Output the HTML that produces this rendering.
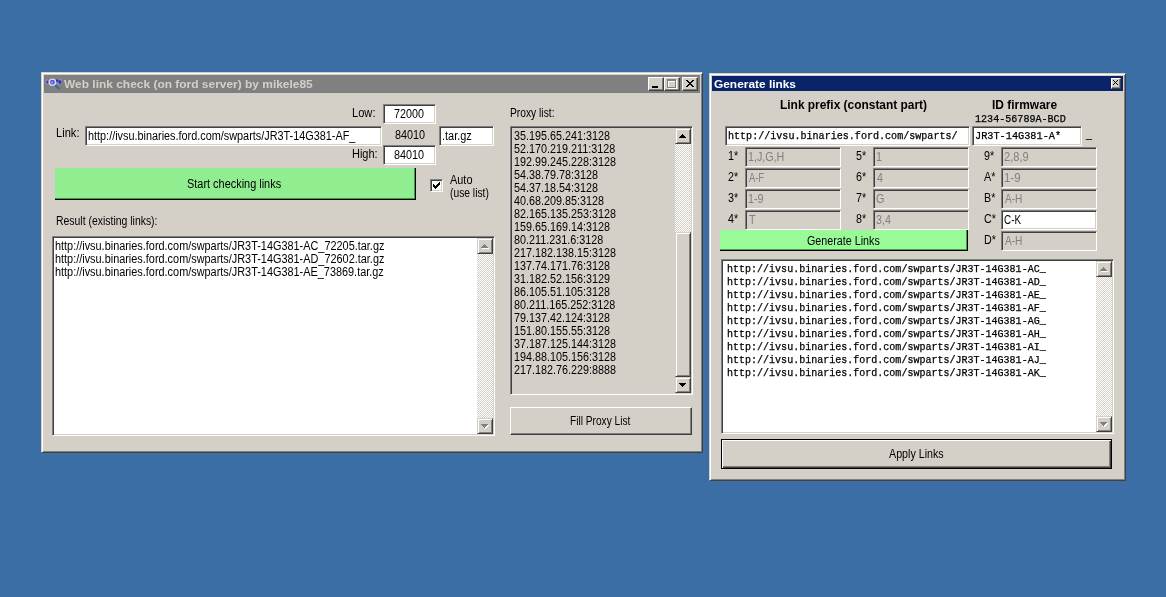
<!DOCTYPE html>
<html><head><meta charset="utf-8"><title>Web link check</title>
<style>
html,body{margin:0;padding:0}
body{width:1166px;height:597px;background:#3A6EA5;position:relative;overflow:hidden;color:#000}
*{box-sizing:border-box}
.a{position:absolute;white-space:pre;transform-origin:0 0;line-height:13px}
.n{font:normal 12.5px/13px "Liberation Sans",sans-serif}
.tb{font:bold 11px/13px "Liberation Sans",sans-serif}
.hb{font:bold 12px/13px "Liberation Sans",sans-serif}
.m{font:normal 10px/13px "Liberation Mono",monospace;-webkit-text-stroke:0.25px #000}
.win{position:absolute;background:#D4D0C8;border:1px solid;border-color:#D4D0C8 #404040 #404040 #D4D0C8;box-shadow:inset 1px 1px 0 #fff,inset -1px -1px 0 #808080}
.sunk{position:absolute;border:1px solid;border-color:#808080 #fff #fff #808080;box-shadow:inset 1px 1px 0 #404040,inset -1px -1px 0 #D4D0C8}
.btn{position:absolute;border:1px solid;border-color:#fff #404040 #404040 #fff;box-shadow:inset -1px -1px 0 #808080;background:#D4D0C8}
.sb{border-color:#D4D0C8 #404040 #404040 #D4D0C8;box-shadow:inset 1px 1px 0 #fff,inset -1px -1px 0 #808080}
.track{position:absolute;background-color:#E9E7E3;background-image:repeating-conic-gradient(#fff 0 25%,#D4D0C8 0 50%);background-size:2px 2px}

</style></head><body>
<div class="win" style="left:41px;top:72px;width:662px;height:381px"></div>
<div class="a" style="left:44px;top:75px;width:656px;height:18px;background:#808080"></div>
<svg class="a" style="left:46px;top:77px" width="17" height="14" viewBox="0 0 17 14">
<ellipse cx="1.5" cy="5" rx="2" ry="2.7" fill="#9A9CE0" opacity=".55"/>
<ellipse cx="12.7" cy="4.6" rx="3.6" ry="3" fill="#9A9CE0" opacity=".5"/>
<ellipse cx="1.5" cy="5" rx="1" ry="1.6" fill="#3030C4"/>
<ellipse cx="11.2" cy="3.6" rx="1.3" ry="1.3" fill="#2A2AC4"/>
<ellipse cx="13.9" cy="5" rx="1.6" ry="1.8" fill="#2A2AC4"/>
<path d="M9.4 8.4L12.8 11.4" stroke="#2A6CA8" stroke-width="2" stroke-linecap="round"/>
<circle cx="6.4" cy="5.2" r="3.1" fill="#5458D0" stroke="#DADEF2" stroke-width="1.3"/>
<circle cx="6" cy="5.6" r="1" fill="#A8ACE8"/>
</svg>
<div class="btn" style="left:648px;top:77px;width:16px;height:14px;"></div><div class="a" style="left:652px;top:86px;width:6px;height:2px;background:#000"></div>
<div class="btn" style="left:664px;top:77px;width:16px;height:14px;"></div><div class="a" style="left:668px;top:80px;width:9px;height:9px;border:1px solid #fff;border-top-width:2px"></div><div class="a" style="left:667px;top:79px;width:9px;height:9px;border:1px solid #808080;border-top-width:2px"></div>
<div class="btn" style="left:682px;top:77px;width:16px;height:14px;"></div><svg class="a" style="left:686px;top:80px" width="8" height="7" shape-rendering="crispEdges"><path d="M0 0h2v1h1v1h2v-1h1v-1h2v1h-1v1h-1v1h-1v1h1v1h1v1h1v1h-2v-1h-1v-1h-2v1h-1v1h-2v-1h1v-1h1v-1h1v-1h-1v-1h-1v-1h-1z" fill="#000"/></svg>
<div class="sunk" style="left:383px;top:104px;width:53px;height:20px;background:#fff"></div>
<div class="sunk" style="left:85px;top:126px;width:297px;height:20px;background:#fff"></div>
<div class="sunk" style="left:439px;top:126px;width:55px;height:20px;background:#fff"></div>
<div class="sunk" style="left:383px;top:145px;width:53px;height:20px;background:#fff"></div>
<div class="a" style="left:55px;top:168px;width:361px;height:32px;background:#90EE90;border-right:1px solid #000;border-bottom:1px solid #000;box-shadow:inset -1px -1px 0 #3E9A3E"></div>
<div class="sunk" style="left:430px;top:179px;width:13px;height:13px;background:#fff"></div>
<svg class="a" style="left:433px;top:182px" width="7" height="7" shape-rendering="crispEdges"><path d="M0 2h1v1h1v1h1v-1h1v-1h1v-1h1v-1h1v3h-1v1h-1v1h-1v1h-1v1h-1v-1h-1v-1h-1z" fill="#000"/></svg>
<div class="sunk" style="left:52px;top:236px;width:443px;height:200px;background:#fff"></div>
<div class="track" style="left:477px;top:238px;width:16px;height:196px"></div><div class="btn sb" style="left:477px;top:238px;width:16px;height:16px;"></div><svg class="a" style="left:482px;top:245px" width="7" height="4" shape-rendering="crispEdges"><path d="M3 0h1v1h1v1h1v1h1v1h-7v-1h1v-1h1v-1h1z" fill="#fff"/></svg><svg class="a" style="left:481px;top:244px" width="7" height="4" shape-rendering="crispEdges"><path d="M3 0h1v1h1v1h1v1h1v1h-7v-1h1v-1h1v-1h1z" fill="#808080"/></svg><div class="btn sb" style="left:477px;top:418px;width:16px;height:16px;"></div><svg class="a" style="left:482px;top:425px" width="7" height="4" shape-rendering="crispEdges"><path d="M0 0h7v1h-1v1h-1v1h-1v1h-1v-1h-1v-1h-1v-1h-1z" fill="#fff"/></svg><svg class="a" style="left:481px;top:424px" width="7" height="4" shape-rendering="crispEdges"><path d="M0 0h7v1h-1v1h-1v1h-1v1h-1v-1h-1v-1h-1v-1h-1z" fill="#808080"/></svg>
<div class="sunk" style="left:510px;top:126px;width:183px;height:269px;background:#D4D0C8"></div>
<div class="track" style="left:675px;top:128px;width:16px;height:265px"></div><div class="btn sb" style="left:675px;top:128px;width:16px;height:16px;"></div><svg class="a" style="left:679px;top:134px" width="7" height="4" shape-rendering="crispEdges"><path d="M3 0h1v1h1v1h1v1h1v1h-7v-1h1v-1h1v-1h1z" fill="#000"/></svg><div class="btn sb" style="left:675px;top:377px;width:16px;height:16px;"></div><svg class="a" style="left:679px;top:383px" width="7" height="4" shape-rendering="crispEdges"><path d="M0 0h7v1h-1v1h-1v1h-1v1h-1v-1h-1v-1h-1v-1h-1z" fill="#000"/></svg><div class="btn sb" style="left:675px;top:232px;width:16px;height:145px;"></div>
<div class="btn" style="left:510px;top:407px;width:182px;height:28px;"></div>
<div class="win" style="left:709px;top:73px;width:417px;height:408px"></div>
<div class="a" style="left:712px;top:76px;width:411px;height:15px;background:#0A246A"></div>
<div class="btn" style="left:1111px;top:78px;width:10px;height:11px;"></div><svg class="a" style="left:1113px;top:80px" width="5" height="5" shape-rendering="crispEdges"><path d="M0 0h1v1h1v1h1v-1h1v-1h1v1h-1v1h-1v1h1v1h1v1h-1v-1h-1v-1h-1v1h-1v1h-1v-1h1v-1h1v-1h-1v-1h-1z" fill="#000"/></svg>
<div class="sunk" style="left:725px;top:126px;width:245px;height:20px;background:#fff"></div>
<div class="sunk" style="left:972px;top:126px;width:110px;height:20px;background:#fff"></div>
<div class="sunk" style="left:745px;top:147px;width:96px;height:20px;background:#D4D0C8"></div>
<div class="sunk" style="left:745px;top:168px;width:96px;height:20px;background:#D4D0C8"></div>
<div class="sunk" style="left:745px;top:189px;width:96px;height:20px;background:#D4D0C8"></div>
<div class="sunk" style="left:745px;top:210px;width:96px;height:20px;background:#D4D0C8"></div>
<div class="sunk" style="left:873px;top:147px;width:96px;height:20px;background:#D4D0C8"></div>
<div class="sunk" style="left:873px;top:168px;width:96px;height:20px;background:#D4D0C8"></div>
<div class="sunk" style="left:873px;top:189px;width:96px;height:20px;background:#D4D0C8"></div>
<div class="sunk" style="left:873px;top:210px;width:96px;height:20px;background:#D4D0C8"></div>
<div class="sunk" style="left:1001px;top:147px;width:96px;height:20px;background:#D4D0C8"></div>
<div class="sunk" style="left:1001px;top:168px;width:96px;height:20px;background:#D4D0C8"></div>
<div class="sunk" style="left:1001px;top:189px;width:96px;height:20px;background:#D4D0C8"></div>
<div class="sunk" style="left:1001px;top:210px;width:96px;height:20px;background:#fff"></div>
<div class="sunk" style="left:1001px;top:231px;width:96px;height:20px;background:#D4D0C8"></div>
<div class="a" style="left:720px;top:230px;width:248px;height:21px;background:#98FB98;border-right:1px solid #000;border-bottom:1px solid #000;box-shadow:inset -1px -1px 0 #42A242"></div>
<div class="sunk" style="left:721px;top:259px;width:393px;height:175px;background:#fff"></div>
<div class="track" style="left:1096px;top:261px;width:16px;height:171px"></div><div class="btn sb" style="left:1096px;top:261px;width:16px;height:16px;"></div><svg class="a" style="left:1101px;top:268px" width="7" height="4" shape-rendering="crispEdges"><path d="M3 0h1v1h1v1h1v1h1v1h-7v-1h1v-1h1v-1h1z" fill="#fff"/></svg><svg class="a" style="left:1100px;top:267px" width="7" height="4" shape-rendering="crispEdges"><path d="M3 0h1v1h1v1h1v1h1v1h-7v-1h1v-1h1v-1h1z" fill="#808080"/></svg><div class="btn sb" style="left:1096px;top:416px;width:16px;height:16px;"></div><svg class="a" style="left:1101px;top:423px" width="7" height="4" shape-rendering="crispEdges"><path d="M0 0h7v1h-1v1h-1v1h-1v1h-1v-1h-1v-1h-1v-1h-1z" fill="#fff"/></svg><svg class="a" style="left:1100px;top:422px" width="7" height="4" shape-rendering="crispEdges"><path d="M0 0h7v1h-1v1h-1v1h-1v1h-1v-1h-1v-1h-1v-1h-1z" fill="#808080"/></svg>
<div class="btn" style="left:721px;top:439px;width:391px;height:30px;border-color:#000;box-shadow:inset 1px 1px 0 #fff,inset -1px -1px 0 #404040,inset -2px -2px 0 #808080"></div>
<div id="txt" style="position:absolute;left:0;top:0;width:1166px;height:597px;will-change:transform">
<div class="a tb" id="t1" style="left:64.00px;top:78.00px;transform:scaleX(1.0860);color:#D4D0C8">Web link check (on ford server) by mikele85</div>
<div class="a n" id="low" style="left:352.00px;top:107.00px;transform:scaleX(0.8897)">Low:</div>
<div class="a n" id="v72" style="left:394.00px;top:108.00px;transform:scaleX(0.8586)">72000</div>
<div class="a n" id="link" style="left:56.00px;top:127.00px;transform:scaleX(0.8897)">Link:</div>
<div class="a n" id="lk" style="left:88.00px;top:130.00px;transform:scaleX(0.8688)">http://ivsu.binaries.ford.com/swparts/JR3T-14G381-AF_</div>
<div class="a n" id="v84a" style="left:395.00px;top:129.00px;transform:scaleX(0.8660)">84010</div>
<div class="a n" id="tgz" style="left:442.00px;top:130.00px;transform:scaleX(0.8748)">.tar.gz</div>
<div class="a n" id="high" style="left:352.00px;top:148.00px;transform:scaleX(0.8779)">High:</div>
<div class="a n" id="v84b" style="left:394.00px;top:149.00px;transform:scaleX(0.8660)">84010</div>
<div class="a n" id="start" style="left:187.00px;top:178.00px;transform:scaleX(0.8740)">Start checking links</div>
<div class="a n" id="auto" style="left:450.00px;top:174.00px;transform:scaleX(0.8738)">Auto</div>
<div class="a n" id="usel" style="left:450.00px;top:187.00px;transform:scaleX(0.8228)">(use list)</div>
<div class="a n" id="res" style="left:56.00px;top:215.00px;transform:scaleX(0.8349)">Result (existing links):</div>
<div class="a n" id="rr" style="left:55.00px;top:240.00px;transform:scaleX(0.8715)">http://ivsu.binaries.ford.com/swparts/JR3T-14G381-AC_72205.tar.gz
http://ivsu.binaries.ford.com/swparts/JR3T-14G381-AD_72602.tar.gz
http://ivsu.binaries.ford.com/swparts/JR3T-14G381-AE_73869.tar.gz</div>
<div class="a n" id="pl" style="left:510.00px;top:107.00px;transform:scaleX(0.8210)">Proxy list:</div>
<div class="a n" id="pp" style="left:514.00px;top:130.00px;transform:scaleX(0.8626)">35.195.65.241:3128
52.170.219.211:3128
192.99.245.228:3128
54.38.79.78:3128
54.37.18.54:3128
40.68.209.85:3128
82.165.135.253:3128
159.65.169.14:3128
80.211.231.6:3128
217.182.138.15:3128
137.74.171.76:3128
31.182.52.156:3129
86.105.51.105:3128
80.211.165.252:3128
79.137.42.124:3128
151.80.155.55:3128
37.187.125.144:3128
194.88.105.156:3128
217.182.76.229:8888</div>
<div class="a n" id="fill" style="left:570.00px;top:415.00px;transform:scaleX(0.8118)">Fill Proxy List</div>
<div class="a tb" id="t2" style="left:714.00px;top:78.00px;transform:scaleX(1.0814);color:#fff">Generate links</div>
<div class="a hb" id="h1" style="left:780.00px;top:99.00px;transform:scaleX(0.9934)">Link prefix (constant part)</div>
<div class="a hb" id="h2" style="left:992.00px;top:99.00px;transform:scaleX(0.9956)">ID firmware</div>
<div class="a m" id="m0" style="left:975.00px;top:113.00px;transform:scaleX(1.0078)">1234-56789A-BCD</div>
<div class="a m" id="m1" style="left:728.00px;top:130.00px;transform:scaleX(1.0066)">http://ivsu.binaries.ford.com/swparts/</div>
<div class="a m" id="m2" style="left:975.00px;top:130.00px;transform:scaleX(1.0247)">JR3T-14G381-A*</div>
<div class="a n" id="us" style="left:1086.00px;top:127.00px;transform:scaleX(0.8600)">_</div>
<div class="a n" id="l00" style="left:728.00px;top:150.00px;transform:scaleX(0.8600)">1*</div>
<div class="a n" id="d00" style="left:748.00px;top:151.00px;transform:scaleX(0.8572);color:#808080">1,J,G,H</div>
<div class="a n" id="l01" style="left:728.00px;top:171.00px;transform:scaleX(0.8600)">2*</div>
<div class="a n" id="d01" style="left:749.00px;top:172.00px;transform:scaleX(0.7491);color:#808080">A-F</div>
<div class="a n" id="l02" style="left:728.00px;top:192.00px;transform:scaleX(0.8600)">3*</div>
<div class="a n" id="d02" style="left:748.00px;top:193.00px;transform:scaleX(0.8600);color:#808080">1-9</div>
<div class="a n" id="l03" style="left:728.00px;top:213.00px;transform:scaleX(0.8600)">4*</div>
<div class="a n" id="d03" style="left:749.00px;top:214.00px;transform:scaleX(0.8600);color:#808080">T</div>
<div class="a n" id="l10" style="left:856.00px;top:150.00px;transform:scaleX(0.8600)">5*</div>
<div class="a n" id="d10" style="left:876.00px;top:151.00px;transform:scaleX(0.8600);color:#808080">1</div>
<div class="a n" id="l11" style="left:856.00px;top:171.00px;transform:scaleX(0.8600)">6*</div>
<div class="a n" id="d11" style="left:877.00px;top:172.00px;transform:scaleX(0.8600);color:#808080">4</div>
<div class="a n" id="l12" style="left:856.00px;top:192.00px;transform:scaleX(0.8600)">7*</div>
<div class="a n" id="d12" style="left:876.00px;top:193.00px;transform:scaleX(0.8600);color:#808080">G</div>
<div class="a n" id="l13" style="left:856.00px;top:213.00px;transform:scaleX(0.8600)">8*</div>
<div class="a n" id="d13" style="left:876.00px;top:214.00px;transform:scaleX(0.8580);color:#808080">3,4</div>
<div class="a n" id="l20" style="left:984.00px;top:150.00px;transform:scaleX(0.8600)">9*</div>
<div class="a n" id="d20" style="left:1004.00px;top:151.00px;transform:scaleX(0.8872);color:#808080">2,8,9</div>
<div class="a n" id="l21" style="left:984.00px;top:171.00px;transform:scaleX(0.8600)">A*</div>
<div class="a n" id="d21" style="left:1004.00px;top:172.00px;transform:scaleX(0.9116);color:#808080">1-9</div>
<div class="a n" id="l22" style="left:984.00px;top:192.00px;transform:scaleX(0.8600)">B*</div>
<div class="a n" id="d22" style="left:1005.00px;top:193.00px;transform:scaleX(0.8081);color:#808080">A-H</div>
<div class="a n" id="l23" style="left:984.00px;top:213.00px;transform:scaleX(0.8600)">C*</div>
<div class="a n" id="d23" style="left:1004.00px;top:214.00px;transform:scaleX(0.7913)">C-K</div>
<div class="a n" id="l24" style="left:984.00px;top:234.00px;transform:scaleX(0.8600)">D*</div>
<div class="a n" id="d24" style="left:1005.00px;top:235.00px;transform:scaleX(0.8081);color:#808080">A-H</div>
<div class="a n" id="gen" style="left:807.00px;top:235.00px;transform:scaleX(0.8588)">Generate Links</div>
<div class="a n" id="apply" style="left:889.00px;top:448.00px;transform:scaleX(0.8561)">Apply Links</div>
<div class="a m" id="kk" style="left:727.00px;top:263.00px;transform:scaleX(1.0020)">http://ivsu.binaries.ford.com/swparts/JR3T-14G381-AC_
http://ivsu.binaries.ford.com/swparts/JR3T-14G381-AD_
http://ivsu.binaries.ford.com/swparts/JR3T-14G381-AE_
http://ivsu.binaries.ford.com/swparts/JR3T-14G381-AF_
http://ivsu.binaries.ford.com/swparts/JR3T-14G381-AG_
http://ivsu.binaries.ford.com/swparts/JR3T-14G381-AH_
http://ivsu.binaries.ford.com/swparts/JR3T-14G381-AI_
http://ivsu.binaries.ford.com/swparts/JR3T-14G381-AJ_
http://ivsu.binaries.ford.com/swparts/JR3T-14G381-AK_</div>
</div>
</body></html>
